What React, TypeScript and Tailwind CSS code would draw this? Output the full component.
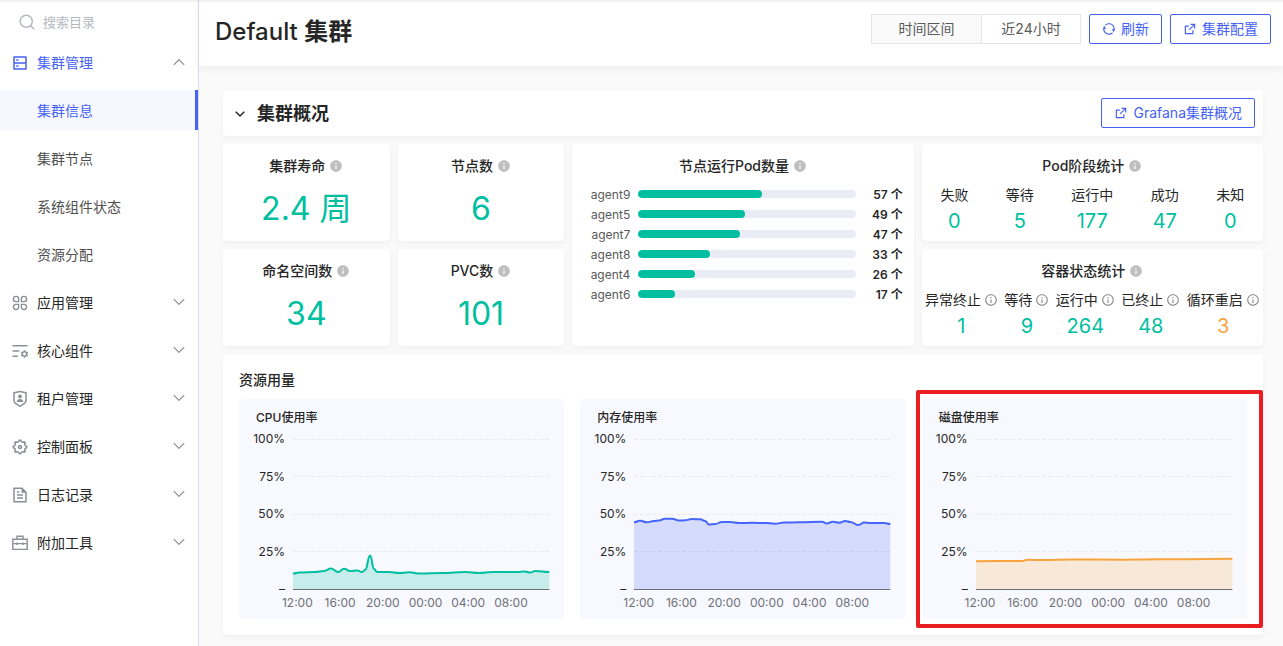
import type { ReactNode } from "react";
import {
  RiArrowDownSLine,
  RiExternalLinkLine,
  RiFileTextLine,
  RiInformationFill,
  RiInformationLine,
  RiListSettingsLine,
  RiRefreshLine,
  RiSearchLine,
  RiServerLine,
  RiSettings5Line,
  RiShieldUserLine,
} from "react-icons/ri";

type Point = [number, number];

function PetalsIcon() {
  return (
    <svg viewBox="0 0 18 18" className="size-[18px]" fill="none" stroke="currentColor" strokeWidth="1.4">
      <path d="M7.6 7.6H4.8A2.6 2.6 0 1 1 7.6 4.8ZM10.4 7.6V4.8A2.6 2.6 0 1 1 13.2 7.6ZM7.6 10.4V13.2A2.6 2.6 0 1 1 4.8 10.4ZM10.4 10.4H13.2A2.6 2.6 0 1 1 10.4 13.2Z" />
    </svg>
  );
}

function ToolboxIcon() {
  return (
    <svg viewBox="0 0 18 18" className="size-[18px]" fill="none" stroke="currentColor" strokeWidth="1.4">
      <path d="M1.8 5.2H16.2V15.4H1.8ZM6 5.2V2.2H12V5.2M1.8 9.6H16.2M6 8.4V11M12 8.4V11" />
    </svg>
  );
}

function Chevron({ up = false }: { up?: boolean }) {
  return (
    <svg
      viewBox="0 0 12 12"
      className={up ? "size-3 rotate-180" : "size-3"}
      fill="none"
      stroke="#8c8f96"
      strokeWidth="1.2"
    >
      <path d="M0.8 3.2 6 8.4 11.2 3.2" />
    </svg>
  );
}

const sections: { label: string; icon: ReactNode }[] = [
  { label: "应用管理", icon: <PetalsIcon /> },
  { label: "核心组件", icon: <RiListSettingsLine className="size-[18px]" /> },
  { label: "租户管理", icon: <RiShieldUserLine className="size-[18px]" /> },
  { label: "控制面板", icon: <RiSettings5Line className="size-[18px]" /> },
  { label: "日志记录", icon: <RiFileTextLine className="size-[18px]" /> },
  { label: "附加工具", icon: <ToolboxIcon /> },
];

function SectionButton({ label, icon, open = false }: { label: string; icon: ReactNode; open?: boolean }) {
  return (
    <button
      type="button"
      aria-expanded={open}
      className={`flex h-10 items-center justify-between pr-[13px] pl-[11px] ${open ? "text-[#4562f5]" : ""}`}
    >
      <span className="flex items-center gap-2 pt-[2px]">
        <span className={open ? "" : "text-[#8c8f96]"}>{icon}</span>
        {label}
      </span>
      <Chevron up={open} />
    </button>
  );
}

function Sidebar() {
  return (
    <aside className="w-[199px] shrink-0 border-r border-[#dcdde8] bg-white">
      <label className="flex h-[42px] items-center gap-[7px] pt-[2px] pl-[18px] text-[#b5b8c0]">
        <RiSearchLine className="size-[18px] shrink-0" />
        <input
          type="search"
          aria-label="搜索目录"
          placeholder="搜索目录"
          className="w-full min-w-0 bg-transparent text-[13px] outline-none placeholder:text-[#b5b8c0]"
        />
      </label>
      <nav className="flex flex-col gap-2">
        <SectionButton label="集群管理" icon={<RiServerLine className="size-[18px]" />} open />
        <a
          href="#集群信息"
          aria-current="page"
          className="flex h-10 items-center border-r-[3px] border-[#4562f5] bg-[#f7f8ff] pt-[2px] pl-[37px] text-[#4562f5]"
        >
          集群信息
        </a>
        {["集群节点", "系统组件状态", "资源分配"].map((label) => (
          <a key={label} href={`#${label}`} className="flex h-10 items-center pt-[2px] pl-[37px] text-[#4f4f4f]">
            {label}
          </a>
        ))}
        {sections.map(({ label, icon }) => (
          <SectionButton key={label} label={label} icon={icon} />
        ))}
      </nav>
    </aside>
  );
}

function OutlineButton({ icon, children }: { icon: ReactNode; children: ReactNode }) {
  return (
    <button
      type="button"
      className="flex h-[30px] items-center gap-[5px] rounded-xs border border-[#4562f5] bg-white px-3 whitespace-nowrap text-[#4562f5]"
    >
      {icon}
      {children}
    </button>
  );
}

function Card({ className = "", children }: { className?: string; children: ReactNode }) {
  return <section className={`rounded bg-white shadow-[0_2px_6px_rgba(0,0,0,0.05)] ${className}`}>{children}</section>;
}

function CardTitle({ children }: { children: ReactNode }) {
  return (
    <h3 className="flex h-5 items-center justify-center gap-1 font-medium">
      {children}
      <RiInformationFill className="size-[14px] text-[#bfbfbf]" />
    </h3>
  );
}

function NumberCard({ title, value }: { title: string; value: string }) {
  return (
    <Card className="h-[97px] pt-3 text-center">
      <CardTitle>{title}</CardTitle>
      <p className="mt-[13px] text-[32px] leading-10 text-[#00bfa0]">{value}</p>
    </Card>
  );
}

interface Stat {
  label: string;
  value: number;
  warn?: boolean;
}

function StatsCard({ title, stats, hints = false }: { title: string; stats: Stat[]; hints?: boolean }) {
  return (
    <Card className="h-[97px] pt-3">
      <CardTitle>{title}</CardTitle>
      <dl className="mt-[7px] flex justify-around">
        {stats.map(({ label, value, warn }) => (
          <div key={label} className="text-center">
            <dt className="flex h-6 items-center gap-[3px] whitespace-nowrap">
              {label}
              {hints && <RiInformationLine className="size-[14px] text-[#8c8c8c]" />}
            </dt>
            <dd className={warn ? "text-xl leading-7 text-[#f9a33c]" : "text-xl leading-7 text-[#00bfa0]"}>{value}</dd>
          </div>
        ))}
      </dl>
    </Card>
  );
}

const podsByNode = [
  { name: "agent9", pods: 57 },
  { name: "agent5", pods: 49 },
  { name: "agent7", pods: 47 },
  { name: "agent8", pods: 33 },
  { name: "agent4", pods: 26 },
  { name: "agent6", pods: 17 },
];

function PodsPerNode() {
  return (
    <Card className="col-span-2 row-span-2 pt-3">
      <CardTitle>节点运行Pod数量</CardTitle>
      <ul className="mt-2 pr-[11px] pl-4 text-xs leading-5">
        {podsByNode.map(({ name, pods }) => (
          <li key={name} className="flex h-5 items-center">
            <span className="w-[42px] pt-[2px] text-right whitespace-nowrap text-[#595959]">{name}</span>
            <span className="ml-2 h-2 flex-1 overflow-hidden rounded-full bg-[#e9ecf5]">
              <span className="block h-full rounded-full bg-[#00bfa0]" style={{ width: `${pods}%` }} />
            </span>
            <span className="w-[47px] pt-[2px] text-right font-semibold">{pods} 个</span>
          </li>
        ))}
      </ul>
    </Card>
  );
}

const cpu: Point[] = [
  [0, 134.5], [6, 133.5], [22, 133], [31, 132], [38, 129.5], [45, 133], [51, 129.7], [57, 132], [64, 131.5],
  [69, 133], [72, 131], [77, 116.5], [81, 130], [84, 133], [96, 133], [106, 134], [116, 133.3], [127, 134.5],
  [149, 134], [172, 133], [186, 134], [199, 133], [224, 133], [231, 132.5], [237, 133.5], [242, 132], [256, 133],
];

const memory: Point[] = [
  [0, 83.3], [6, 81.7], [13, 83.3], [20, 82], [25, 81.5], [31, 79.7], [38, 79.7], [45, 81.5], [51, 81.3], [58, 80],
  [66, 80.3], [71, 82], [75, 85.5], [81, 85], [88, 83], [96, 83], [105, 84], [118, 83.8], [131, 84], [141, 84.7],
  [150, 83.5], [165, 83.3], [188, 82.7], [192, 84.5], [199, 82.7], [205, 83.7], [211, 82], [216, 83], [224, 86],
  [230, 83.5], [236, 84], [250, 84], [256, 85],
];

const disk: Point[] = [
  [0, 122.2], [45, 122], [52, 120.8], [68, 121.1], [95, 120.5], [150, 120.7], [165, 120.4], [200, 120.2], [256, 119.8],
];

function smoothLine(points: Point[]) {
  let d = `M${points[0][0]} ${points[0][1]}`;
  for (let i = 1; i < points.length; i++) {
    const [x0, y0] = points[i - 1];
    const [x1, y1] = points[i];
    const mid = (x0 + x1) / 2;
    d += `C${mid} ${y0} ${mid} ${y1} ${x1} ${y1}`;
  }
  return d;
}

function UsageChart({ title, color, points, highlighted = false }: { title: string; color: string; points: Point[]; highlighted?: boolean }) {
  const line = smoothLine(points);
  return (
    <figure className="relative rounded bg-[#f8f9fe] pt-[9px] pr-[15px] pb-[6px] text-xs leading-5">
      <figcaption className="pl-[17px] font-medium">{title}</figcaption>
      <div className="mt-px flex">
        <div className="flex h-[170px] w-[54px] shrink-0 flex-col justify-between pr-2 text-right">
          {["100%", "75%", "50%", "25%", "–"].map((tick) => (
            <span key={tick}>{tick}</span>
          ))}
        </div>
        <div className="min-w-0 flex-1 pt-[10px]">
          <svg viewBox="0 0 256 151" preserveAspectRatio="none" className="block h-[151px] w-full overflow-visible" fill="none">
            {[0.5, 37.5, 75.5, 112.5].map((y) => (
              <path key={y} d={`M0 ${y}H256`} stroke="#e8eaee" strokeDasharray="4 2" />
            ))}
            <path d={`${line}V150.5H0Z`} fill={color} fillOpacity="0.2" />
            <path d={line} stroke={color} strokeWidth="2" vectorEffect="non-scaling-stroke" />
            <path d="M0 150.5H256" stroke="#6e7079" />
          </svg>
          <div className="mt-[3px] mr-[17px] -ml-[17px] grid grid-cols-6 text-center text-[#6e7079]">
            {["12:00", "16:00", "20:00", "00:00", "04:00", "08:00"].map((time) => (
              <span key={time}>{time}</span>
            ))}
          </div>
        </div>
      </div>
      {highlighted && (
        <div className="pointer-events-none absolute -top-[9px] -right-4 -bottom-[9px] -left-[6px] rounded-xs border-4 border-[#e91e20]" />
      )}
    </figure>
  );
}

export default function App() {
  return (
    <div className="flex min-h-screen bg-[#fafafa] font-['Inter','Noto_Sans_CJK_SC',sans-serif] text-sm text-[#262626]">
      <Sidebar />
      <div className="min-w-0 flex-1">
        <header className="flex h-[66px] items-start justify-between bg-white pt-[14px] pr-3 pl-4 shadow-[0_2px_10px_rgba(0,0,0,0.06)]">
          <h1 className="text-2xl leading-9 font-medium">
            Default <span className="font-semibold">集群</span>
          </h1>
          <div className="flex gap-2">
            <div className="flex h-[30px] text-[#595959]">
              <span id="range-label" className="flex w-[111px] items-center justify-center border border-[#e5e5e5] bg-[#fafafa]">
                时间区间
              </span>
              <button type="button" aria-describedby="range-label" className="w-[99px] border border-l-0 border-[#e5e5e5] bg-white">
                近24小时
              </button>
            </div>
            <OutlineButton icon={<RiRefreshLine className="size-[14px]" />}>刷新</OutlineButton>
            <OutlineButton icon={<RiExternalLinkLine className="size-[14px]" />}>集群配置</OutlineButton>
          </div>
        </header>
        <main className="flex flex-col gap-2 pt-6 pr-5 pb-[11px] pl-6">
          <Card className="flex h-[46px] items-center justify-between px-2">
            <button type="button" aria-expanded="true" className="flex items-center gap-2 pt-[2px] text-lg font-semibold">
              <RiArrowDownSLine className="size-[18px]" />
              集群概况
            </button>
            <OutlineButton icon={<RiExternalLinkLine className="size-[14px]" />}>Grafana集群概况</OutlineButton>
          </Card>
          <div className="grid grid-cols-6 gap-2">
            <NumberCard title="集群寿命" value="2.4 周" />
            <NumberCard title="节点数" value="6" />
            <PodsPerNode />
            <div className="col-span-2 row-span-2 flex flex-col gap-2">
              <StatsCard
                title="Pod阶段统计"
                stats={[
                  { label: "失败", value: 0 },
                  { label: "等待", value: 5 },
                  { label: "运行中", value: 177 },
                  { label: "成功", value: 47 },
                  { label: "未知", value: 0 },
                ]}
              />
              <StatsCard
                title="容器状态统计"
                hints
                stats={[
                  { label: "异常终止", value: 1 },
                  { label: "等待", value: 9 },
                  { label: "运行中", value: 264 },
                  { label: "已终止", value: 48 },
                  { label: "循环重启", value: 3, warn: true },
                ]}
              />
            </div>
            <NumberCard title="命名空间数" value="34" />
            <NumberCard title="PVC数" value="101" />
          </div>
          <Card className="px-4 pt-4 pb-4">
            <h2 className="leading-5 font-medium">资源用量</h2>
            <div className="mt-[9px] grid grid-cols-3 gap-4">
              <UsageChart title="CPU使用率" color="#00bfa0" points={cpu} />
              <UsageChart title="内存使用率" color="#4565fb" points={memory} />
              <UsageChart title="磁盘使用率" color="#f9a33c" points={disk} highlighted />
            </div>
          </Card>
        </main>
      </div>
      <div className="pointer-events-none absolute inset-x-0 top-0 h-[3px] bg-linear-to-b from-black/8 to-transparent" />
    </div>
  );
}
